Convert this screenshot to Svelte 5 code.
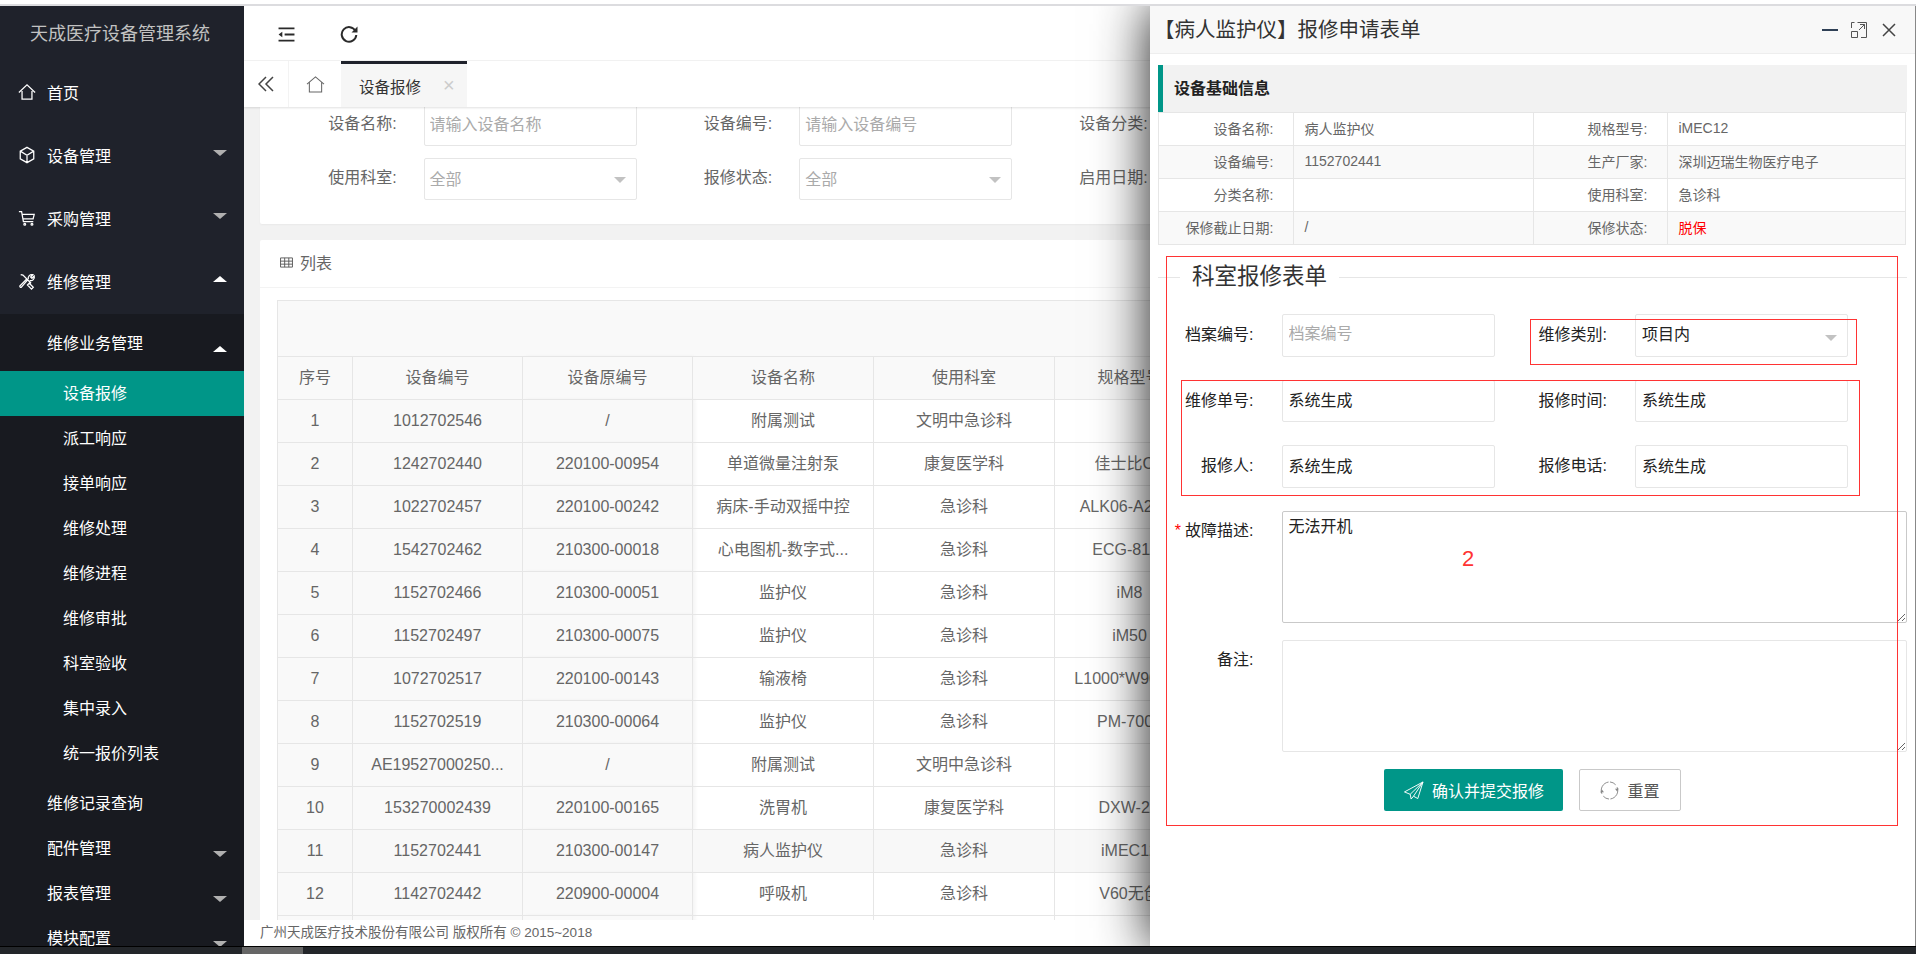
<script>
  const subItems = ['设备报修', '派工响应', '接单响应', '维修处理', '维修进程', '维修审批', '科室验收', '集中录入', '统一报价列表'];
  const rows = [
    ['1', '1012702546', '/', '附属测试', '文明中急诊科', ''],
    ['2', '1242702440', '220100-00954', '单道微量注射泵', '康复医学科', '佳士比CX'],
    ['3', '1022702457', '220100-00242', '病床-手动双摇中控', '急诊科', 'ALK06-A2000'],
    ['4', '1542702462', '210300-00018', '心电图机-数字式...', '急诊科', 'ECG-8110'],
    ['5', '1152702466', '210300-00051', '监护仪', '急诊科', 'iM8'],
    ['6', '1152702497', '210300-00075', '监护仪', '急诊科', 'iM50'],
    ['7', '1072702517', '220100-00143', '输液椅', '急诊科', 'L1000*W900*H'],
    ['8', '1152702519', '210300-00064', '监护仪', '急诊科', 'PM-7000'],
    ['9', 'AE19527000250...', '/', '附属测试', '文明中急诊科', ''],
    ['10', '153270002439', '220100-00165', '洗胃机', '康复医学科', 'DXW-2A'],
    ['11', '1152702441', '210300-00147', '病人监护仪', '急诊科', 'iMEC12'],
    ['12', '1142702442', '220900-00004', '呼吸机', '急诊科', 'V60无创'],
    ['', '', '', '', '', '']
  ];
  const info = [
    ['设备名称:', '病人监护仪', '规格型号:', 'iMEC12'],
    ['设备编号:', '1152702441', '生产厂家:', '深圳迈瑞生物医疗电子'],
    ['分类名称:', '', '使用科室:', '急诊科'],
    ['保修截止日期:', '/', '保修状态:', '脱保']
  ];
  const fault = '无法开机';
</script>

<div class="page">
  <div class="strip"></div>
  <div class="frame">
    <aside class="side">
      <div class="logo">天成医疗设备管理系统</div>
      <nav>
        <div class="top-item">
          <svg class="ico" viewBox="0 0 20 20"><path d="M1 10.500 10 2l9 8.500M4.500 9v9h11V9" /></svg>
          <span>首页</span>
        </div>
        <div class="top-item">
          <svg class="ico" viewBox="0 0 20 20"><path d="M10 1.500 17.500 5.800v8.400L10 18.500 2.500 14.200V5.800zM3 6l7 4.200L17 6M10 10.200V18" /></svg>
          <span>设备管理</span><i class="arrow down"></i>
        </div>
        <div class="top-item">
          <svg class="ico" viewBox="0 0 20 20"><path d="M1 3h3l2 11h11M4.700 6H18l-1.200 5H6" /><circle cx="7.500" cy="17" r="1" /><circle cx="15.500" cy="17" r="1" /></svg>
          <span>采购管理</span><i class="arrow down"></i>
        </div>
        <div class="top-item">
          <svg class="ico" viewBox="0 0 20 20"><path d="M3 3l2.500 0.500 9 9M12.500 12.500l4.500 4.500-2 2-4.500-4.500zM11.500 8a4 4 0 0 1 5-5l-2.500 2.500 1.500 1.500 2.500-2.500a4 4 0 0 1-5 5M11 8.500 3.500 17a1.400 1.400 0 0 1-1.500-1.500L10 7.500" /></svg>
          <span>维修管理</span><i class="arrow up"></i>
        </div>
        <div class="sub">
          <div class="sub-head"><span>维修业务管理</span><i class="arrow up low"></i></div>
          {#each subItems as item, i}
            <div class="leaf" class:active={i === 0}>{item}</div>
          {/each}
          <div class="sub-row first">维修记录查询</div>
          <div class="sub-row"><span>配件管理</span><i class="arrow down low"></i></div>
          <div class="sub-row"><span>报表管理</span><i class="arrow down low"></i></div>
          <div class="sub-row"><span>模块配置</span><i class="arrow down low"></i></div>
        </div>
      </nav>
    </aside>

    <main class="main">
      <header class="bar">
        <svg class="bar-ico" viewBox="0 0 18 16"><path d="M0.500 1.500h17M7 8h10.500M0.500 14.500h17" /><path class="solid" d="M0.500 8 4.500 5v6z" /></svg>
        <svg class="bar-ico refresh" viewBox="0 0 18 18"><path d="M15.500 6A7.300 7.300 0 1 0 16.300 10" /><path class="solid" d="M17.500 1.500v6h-6z" /></svg>
      </header>
      <div class="tabs">
        <div class="tab-btn">
          <svg viewBox="0 0 16 16"><path d="M8 1 1 8l7 7M15 1 8 8l7 7" /></svg>
        </div>
        <div class="tab-home">
          <svg viewBox="0 0 20 18"><path d="M1 8.500 10 1l9 7.500M3.500 7v10h13V7" /></svg>
        </div>
        <div class="tab-on"><span>设备报修</span><b>×</b></div>
      </div>

      <div class="content">
        <section class="card search">
          <div class="search-grid">
            <label>设备名称:</label><input readonly placeholder="请输入设备名称" />
            <label>设备编号:</label><input readonly placeholder="请输入设备编号" />
            <label>设备分类:</label><input readonly />
            <label>使用科室:</label><div class="sel">全部<i class="caret"></i></div>
            <label>报修状态:</label><div class="sel">全部<i class="caret"></i></div>
            <label>启用日期:</label><input readonly />
          </div>
        </section>

        <section class="card list">
          <div class="list-head">
            <svg viewBox="0 0 14 12"><path d="M0.500 1h13v10h-13zM0.500 4.500h13M0.500 7.800h13M5 1v10M9.500 1v10" /></svg>
            <span>列表</span>
          </div>
          <div class="list-body">
            <div class="toolbar"></div>
            <table>
              <colgroup>
                <col class="c1" /><col class="c2" /><col class="c2" />
                <col class="c3" /><col class="c3" /><col class="c4" /><col />
              </colgroup>
              <thead>
                <tr>
                  <th>序号</th><th>设备编号</th><th>设备原编号</th><th>设备名称</th><th>使用科室</th><th>规格型号</th><th></th>
                </tr>
              </thead>
              <tbody>
                {#each rows as r, i}
                  <tr class:hl={i === 10}>
                    {#each r as c, j}
                      <td class:fixed={j < 3} class:edge={j === 2}><div class="cell">{c}</div></td>
                    {/each}
                    <td></td>
                  </tr>
                {/each}
              </tbody>
            </table>
          </div>
        </section>
      </div>

      <footer class="foot">广州天成医疗技术股份有限公司 版权所有 © 2015~2018</footer>
    </main>

    <div class="drawer">
      <div class="d-head">
        <span class="d-title">【病人监护仪】报修申请表单</span>
        <div class="d-ctrl">
          <svg class="min" viewBox="0 0 16 4"><path d="M0 2h16" /></svg>
          <svg class="max" viewBox="0 0 16 16"><path d="M6.500 0.500h9v15H10M0.500 6V0.500h3M0.500 9.500h6v6h-6zM8 8l5.500-5.500M9 2.500h4.500V7" /></svg>
          <svg class="close" viewBox="0 0 14 14"><path d="M1 1l12 12M13 1 1 13" /></svg>
        </div>
      </div>
      <div class="d-body">
        <div class="sec-title">设备基础信息</div>
        <table class="info">
          <colgroup><col class="ik1" /><col class="iv1" /><col class="ik2" /><col /></colgroup>
          <tbody>
            {#each info as r}
              <tr>
                <td class="k">{r[0]}</td>
                <td class="v">{r[1]}</td>
                <td class="k">{r[2]}</td>
                <td class="v" class:red={r[3] === '脱保'}>{r[3]}</td>
              </tr>
            {/each}
          </tbody>
        </table>

        <fieldset>
          <legend>科室报修表单</legend>
          <div class="fields">
            <label>档案编号:</label><input readonly placeholder="档案编号" />
            <label>维修类别:</label><div class="sel dark">项目内<i class="caret"></i></div><span></span>
            <label>维修单号:</label><input readonly value="系统生成" />
            <label>报修时间:</label><input readonly value="系统生成" /><span></span>
            <label>报修人:</label><input readonly value="系统生成" />
            <label>报修电话:</label><input readonly value="系统生成" /><span></span>
            <label class="top"><em>*</em>故障描述:</label><textarea class="wide focus" readonly value={fault}></textarea>
          </div>
          <div class="fields notes">
            <label class="top">备注:</label><textarea class="wide" readonly></textarea>
          </div>
          <div class="actions">
            <button class="primary">
              <svg viewBox="0 0 22 20"><path d="M21 1 1.500 11.500l6 2.500L21 1 11 16l4.500 2.500zM7.500 14l1 5 2.500-3" /></svg>
              确认并提交报修
            </button>
            <button class="ghost">
              <svg viewBox="0 0 20 20"><path d="M9 1.100A9 9 0 0 0 2 13.500M3.500 16A9 9 0 0 0 9.500 19M11 18.900A9 9 0 0 0 18 6.500M16.500 4A9 9 0 0 0 10.500 1" /><path class="solid" d="M18 11 15.800 8.200 19.800 8zM2 9 4.200 11.800 0.200 12z" /></svg>
              重置
            </button>
          </div>
        </fieldset>
      </div>

      <div class="mark m1"></div>
      <div class="mark m2"></div>
      <div class="mark m3"></div>
      <div class="mark-num">2</div>
    </div>
  </div>
  <div class="scroll"><div class="thumb"></div></div>
</div>

<style>
  :global(body) {
    margin: 0;
    background: #fff;
  }
  .page {
    width: 1916px;
    height: 954px;
    display: flex;
    flex-direction: column;
    overflow: hidden;
    font-family: "Liberation Sans", "Noto Sans CJK SC", sans-serif;
    font-size: 16px;
    color: #666;
  }
  .strip {
    height: 4px;
    border-bottom: 2px solid #dcdcdf;
    background: #fff;
    flex: none;
  }
  .frame {
    flex: 1;
    min-height: 0;
    display: flex;
    position: relative;
    overflow: hidden;
  }
  .side {
    width: 244px;
    flex: none;
    background: #1f222b;
    color: #fff;
    overflow: hidden;
  }
  .logo {
    height: 55px;
    box-sizing: border-box;
    padding: 2px 4px 0 0;
    line-height: 53px;
    text-align: center;
    font-size: 18px;
    color: #c2c2c2;
  }
  .top-item {
    height: 63px;
    box-sizing: border-box;
    display: flex;
    align-items: center;
    padding: 0 17px 2px 18px;
    gap: 11px;
  }
  .ico {
    width: 18px;
    height: 18px;
    flex: none;
    fill: none;
    stroke: #fff;
    stroke-width: 1.400;
  }
  .arrow {
    margin-left: auto;
    width: 0;
    height: 0;
    border-left: 7px solid transparent;
    border-right: 7px solid transparent;
    margin-top: -4px;
  }
  .arrow.low {
    margin-top: 14px;
  }
  .arrow.down {
    border-top: 6px solid #b0b0b0;
  }
  .arrow.up {
    border-bottom: 6px solid #fff;
  }
  .sub {
    background: #181a20;
    height: 640px;
    margin-top: 1px;
  }
  .sub-head,
  .sub-row {
    display: flex;
    align-items: center;
    box-sizing: border-box;
    padding: 0 17px 2px 47px;
    height: 45px;
  }
  .sub-head {
    height: 57px;
  }
  .sub-row.first {
    margin-top: 4px;
  }
  .leaf {
    height: 45px;
    line-height: 45px;
    padding-left: 63px;
  }
  .leaf.active {
    background: #009688;
  }
  .main {
    flex: 1;
    min-width: 0;
    display: flex;
    flex-direction: column;
    background: #f2f2f2;
  }
  .bar {
    height: 55px;
    flex: none;
    background: #fff;
    border-bottom: 1px solid #f3f3f3;
    box-sizing: border-box;
    display: flex;
    align-items: center;
    padding: 2px 0 0 34px;
    gap: 45px;
  }
  .bar-ico {
    width: 17px;
    height: 15px;
    fill: none;
    stroke: #2a2a2a;
    stroke-width: 2;
  }
  .bar-ico.refresh {
    width: 18px;
    height: 18px;
  }
  .solid {
    fill: #2a2a2a;
    stroke: none;
  }
  .tabs {
    height: 46px;
    flex: none;
    background: #fff;
    display: flex;
    box-shadow: 0 1px 2px rgba(0, 0, 0, 0.12);
    position: relative;
    z-index: 2;
  }
  .tab-btn {
    width: 44px;
    border-right: 1px solid #f3f3f3;
    display: flex;
    align-items: center;
    justify-content: center;
  }
  .tab-btn svg {
    width: 16px;
    height: 16px;
    fill: none;
    stroke: #444;
    stroke-width: 1.500;
  }
  .tab-home {
    width: 52px;
    display: flex;
    align-items: center;
    justify-content: center;
  }
  .tab-home svg {
    width: 19px;
    height: 17px;
    fill: none;
    stroke: #666;
    stroke-width: 1.100;
  }
  .tab-on {
    width: 126px;
    box-sizing: border-box;
    background: #f6f6f6;
    border-top: 3px solid #1f222b;
    display: flex;
    align-items: center;
    padding-left: 18px;
    color: #333;
    font-size: 15.500px;
  }
  .tab-on b {
    font-weight: 400;
    font-size: 20px;
    color: #ccc;
    margin-left: 22px;
  }
  .content {
    flex: 1;
    min-height: 0;
    overflow: hidden;
    padding: 0 16px;
  }
  .card {
    background: #fff;
    border-radius: 2px;
  }
  .search {
    margin-top: -16px;
    padding: 13px 0 24px 1px;
    box-shadow: 0 1px 2px rgba(0, 0, 0, 0.04);
  }
  .search-grid {
    display: grid;
    grid-template-columns: repeat(3, 162.600px 213px);
    row-gap: 12px;
    width: max-content;
    white-space: nowrap;
  }
  .search-grid label {
    text-align: right;
    padding-right: 27px;
    line-height: 40px;
  }
  input,
  .sel {
    box-sizing: border-box;
    height: 42px;
    width: 100%;
    border: 1px solid #e6e6e6;
    border-radius: 2px;
    background: #fff;
    padding: 0 5px;
    font: inherit;
    line-height: 42px;
    color: #aaa;
    outline: none;
    position: relative;
  }
  input::placeholder {
    color: #aaa;
    opacity: 1;
  }
  .caret {
    position: absolute;
    right: 10px;
    top: 20px;
    width: 0;
    height: 0;
    border-left: 6px solid transparent;
    border-right: 6px solid transparent;
    border-top: 6px solid #c2c2c2;
  }
  .search-grid .caret {
    top: 18px;
  }
  .list {
    margin-top: 16px;
  }
  .list-head {
    height: 48px;
    border-bottom: 1px solid #f3f3f3;
    box-sizing: border-box;
    display: flex;
    align-items: center;
    padding: 0 0 3px 20px;
    gap: 7px;
  }
  .list-head svg {
    width: 13px;
    height: 11px;
    fill: none;
    stroke: #555;
  }
  .list-body {
    padding: 12px 17px;
  }
  .toolbar {
    height: 56px;
    box-sizing: border-box;
    border: 1px solid #e6e6e6;
    border-bottom: none;
    background: #f9f9f9;
    width: 1606px;
  }
  .list table {
    table-layout: fixed;
    border-collapse: collapse;
    width: 1606px;
  }
  .c1 {
    width: 75px;
  }
  .c2 {
    width: 170px;
  }
  .c3 {
    width: 181px;
  }
  .c4 {
    width: 150px;
  }
  .list th,
  .list td {
    height: 43px;
    box-sizing: border-box;
    border: 1px solid #e6e6e6;
    text-align: center;
    padding: 0;
    font-weight: 400;
    color: #666;
  }
  .list th {
    background: #f9f9f9;
    line-height: 24px;
  }
  .list td.fixed {
    background: #f9f9f9;
  }
  .list td.edge,
  .list th:nth-child(3) {
    box-shadow: 2px 0 4px rgba(0, 0, 0, 0.05);
  }
  .list tr.hl td {
    background: #f8f8f8;
  }
  .cell {
    padding: 0 10px;
    white-space: nowrap;
    overflow: hidden;
    line-height: 24px;
    height: 24px;
  }
  .foot {
    height: 26px;
    flex: none;
    background: #fff;
    line-height: 26px;
    padding-left: 16px;
    font-size: 13.500px;
    color: #666;
  }
  .scroll {
    height: 8px;
    flex: none;
    background: #23262a;
    border-top: 1px solid #000;
    box-sizing: border-box;
  }
  .thumb {
    width: 61px;
    height: 7px;
    margin-left: 242px;
    background: #666;
  }
  .drawer {
    position: absolute;
    left: 1150px;
    top: 0;
    right: 0;
    bottom: 0;
    background: #fff;
    box-shadow: 0 0 50px rgba(0, 0, 0, 0.9);
    border-right: 1px solid #888;
    box-sizing: border-box;
    z-index: 5;
  }
  .d-head {
    height: 48px;
    box-sizing: border-box;
    background: #f8f8f8;
    border-bottom: 1px solid #eee;
    display: flex;
    align-items: center;
    padding-left: 4px;
    font-size: 20.500px;
    color: #333;
  }
  .d-title {
    margin-bottom: 4px;
  }
  .d-ctrl {
    margin-left: auto;
    display: flex;
    align-items: center;
    gap: 13px;
    padding-right: 19px;
  }
  .d-ctrl svg {
    fill: none;
    flex: none;
  }
  .min {
    width: 16px;
    height: 4px;
    stroke: #2f4056;
    stroke-width: 2;
  }
  .max {
    width: 16px;
    height: 16px;
    stroke: #555;
    stroke-width: 1;
  }
  .close {
    width: 14px;
    height: 14px;
    stroke: #444;
    stroke-width: 1.500;
    margin-left: 2px;
  }
  .d-body {
    padding: 11px 8px 0;
  }
  .sec-title {
    height: 47px;
    line-height: 47px;
    background: #f2f2f2;
    border-left: 5px solid #009688;
    padding-left: 11px;
    font-weight: 700;
    color: #222;
  }
  .info {
    table-layout: fixed;
    border-collapse: collapse;
    width: 748px;
    font-size: 14px;
  }
  .ik1 {
    width: 134.500px;
  }
  .iv1 {
    width: 240px;
  }
  .ik2 {
    width: 134px;
  }
  .info td {
    height: 33px;
    border: 1px solid #e6e6e6;
    padding: 0 11px 3px;
    box-sizing: border-box;
    color: #666;
    white-space: nowrap;
  }
  .info td.k {
    text-align: right;
    padding-right: 19px;
  }
  .info tr:nth-child(even) td {
    background: #f9f9f9;
  }
  .info td.red {
    color: #f00;
  }
  fieldset {
    margin: 17px 0 0;
    padding: 22px 0 0;
    border: none;
    border-top: 1px solid #e6e6e6;
    min-width: 0;
  }
  legend {
    margin-left: 22px;
    padding: 0 12px;
    font-size: 22.500px;
    line-height: 30px;
    color: #333;
  }
  .fields {
    display: grid;
    grid-template-columns: 123.500px 213px 140.500px 213px 59px;
    grid-auto-rows: auto;
    row-gap: 23px;
    margin-bottom: 23px;
    color: #222;
  }
  .notes {
    margin-top: -5.500px;
    margin-bottom: 17px;
  }
  .fields label {
    text-align: right;
    padding-right: 28px;
    line-height: 42px;
    white-space: nowrap;
  }
  .fields label.top {
    line-height: 40px;
  }
  .fields label em {
    color: #f00;
    font-style: normal;
    margin-right: 4px;
    font-size: 16px;
  }
  .fields input {
    height: 42.500px;
    color: #222;
    padding: 0 5px 3px 6px;
    line-height: 38px;
  }
  .fields .sel {
    height: 42.500px;
    color: #222;
    padding: 0 5px 0 6px;
    line-height: 40px;
  }
  .fields input::placeholder {
    color: #aaa;
  }
  textarea {
    box-sizing: border-box;
    height: 112px;
    border: 1px solid #e6e6e6;
    border-radius: 2px;
    padding: 3px 6px;
    font: inherit;
    line-height: 24px;
    color: #222;
    outline: none;
    background: #fff;
  }
  .wide {
    grid-column: 2 / -1;
  }
  .focus {
    border-color: #c9c9c9;
  }
  .actions {
    display: flex;
    justify-content: center;
    gap: 16px;
  }
  .actions button {
    height: 42px;
    border-radius: 2px;
    font: inherit;
    display: flex;
    align-items: center;
    justify-content: center;
    padding: 0;
    box-sizing: border-box;
    gap: 8px;
  }
  .primary {
    width: 179px;
    border: none;
    background: #009688;
    color: #fff;
  }
  .primary svg {
    width: 21px;
    height: 19px;
    fill: none;
    stroke: #fff;
    stroke-width: 1;
  }
  .ghost {
    width: 102px;
    border: 1px solid #c9c9c9;
    background: #fff;
    color: #555;
  }
  .ghost svg {
    width: 19px;
    height: 19px;
    fill: none;
    stroke: #888;
    stroke-width: 1;
  }
  .ghost .solid {
    fill: #888;
  }
  .mark {
    position: absolute;
    border: 1px solid #f33;
    box-sizing: border-box;
    pointer-events: none;
  }
  .m1 {
    left: 15.500px;
    top: 250px;
    width: 732.500px;
    height: 570px;
  }
  .m2 {
    left: 380px;
    top: 313px;
    width: 327px;
    height: 46px;
  }
  .m3 {
    left: 31px;
    top: 374px;
    width: 679px;
    height: 116px;
  }
  .mark-num {
    position: absolute;
    left: 312px;
    top: 541px;
    color: #f33;
    font-size: 22px;
    line-height: 24px;
  }
</style>
